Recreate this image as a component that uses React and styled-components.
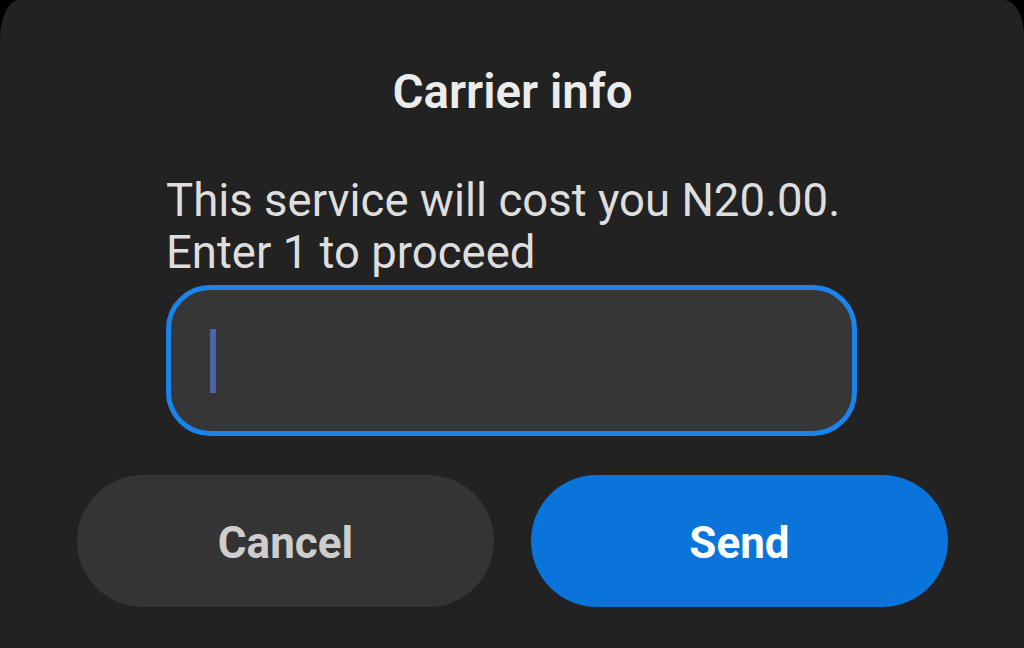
import React from 'react';
import styled, { createGlobalStyle } from 'styled-components';

const GlobalStyle = createGlobalStyle`
  html, body {
    margin: 0;
    padding: 0;
    background: #000;
  }
  body {
    font-family: Roboto, "Noto Sans", "Liberation Sans", sans-serif;
  }
`;

const Dialog = styled.div`
  width: 1024px;
  height: 648px;
  box-sizing: border-box;
  background: #222222;
  border-top-left-radius: 19px 40px;
  border-top-right-radius: 20px 36px;
  padding: 64px 76px 0 77px;
  display: flex;
  flex-direction: column;
`;

const Title = styled.h1`
  margin: 0;
  font-size: 47.5px;
  line-height: 56px;
  font-weight: 600;
  color: #ececec;
  text-align: center;
`;

const Content = styled.div`
  margin: 55px 91px 0 89px;
  display: flex;
  flex-direction: column;
`;

const Message = styled.p`
  margin: 0;
  font-size: 45.5px;
  line-height: 52px;
  font-weight: 400;
  color: #dedede;
`;

const Field = styled.div`
  margin-top: 6px;
  height: 151px;
  box-sizing: border-box;
  border: 5px solid #1b83ec;
  border-radius: 44px;
  background: #363636;
  display: flex;
  align-items: center;
  padding-left: 39px;
`;

const Caret = styled.span`
  width: 6px;
  height: 64px;
  background: #4b62a6;
`;

const Actions = styled.div`
  margin-top: 39px;
  display: grid;
  grid-template-columns: 1fr 1fr;
  gap: 37px;
`;

const Button = styled.button`
  height: 132px;
  border: none;
  border-radius: 66px;
  background: ${(p) => (p.$primary ? '#0a74da' : '#343434')};
  color: ${(p) => (p.$primary ? '#ffffff' : '#cdcdcd')};
  font-family: inherit;
  font-size: 44px;
  font-weight: 700;
  display: flex;
  align-items: center;
  justify-content: center;
  padding: 4px 0 0;
  cursor: pointer;
`;

const App = () => {
  return (
    <>
      <GlobalStyle />
      <Dialog>
        <Title>Carrier info</Title>
        <Content>
          <Message>
            This service will cost you N20.00.
            <br />
            Enter 1 to proceed
          </Message>
          <Field>
            <Caret />
          </Field>
        </Content>
        <Actions>
          <Button>Cancel</Button>
          <Button $primary>Send</Button>
        </Actions>
      </Dialog>
    </>
  );
};

export default App;
